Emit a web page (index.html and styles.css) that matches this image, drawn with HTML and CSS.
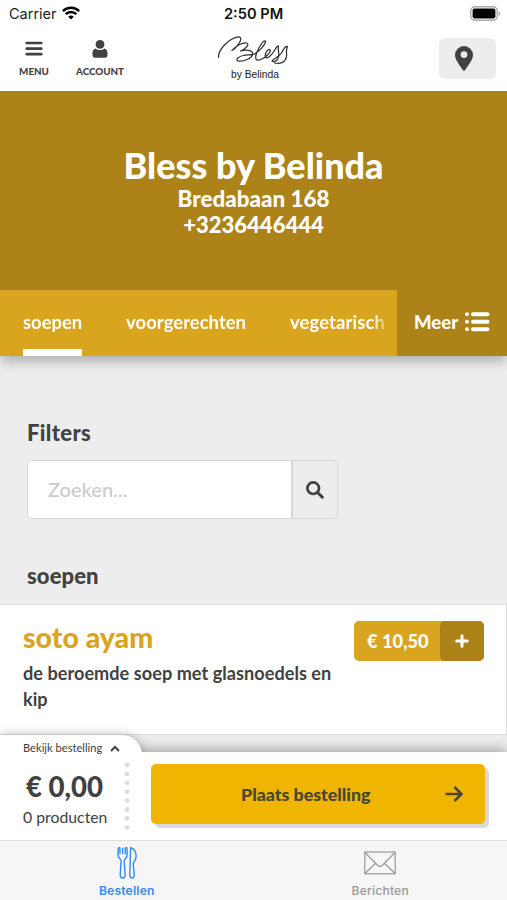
FILE: index.html
```html
<!DOCTYPE html>
<html lang="nl">
<head>
<meta charset="utf-8">
<meta name="viewport" content="width=device-width">
<title>Bless by Belinda</title>
<link rel="stylesheet" href="styles.css">
</head>
<body>
<div class="screen">
  <div class="status">
    <span class="carrier">Carrier</span>
    <svg class="wifi" width="18" height="14" viewBox="0 0 18 14" fill="none" stroke="#000" stroke-width="2.5"><path d="M.9 5.1a11.6 11.6 0 0 1 16.2 0M3.7 8.1a7.6 7.6 0 0 1 10.6 0"/><path d="M9 13.6 6.2 10.8a4 4 0 0 1 5.6 0z" fill="#000" stroke="none"/></svg>
    <span class="time">2:50 PM</span>
    <svg class="battery" width="31" height="15" viewBox="0 0 31 15"><rect x=".8" y=".8" width="26.4" height="13.4" rx="4" fill="#fff" stroke="#aaa" stroke-width="1.4"/><rect x="2.6" y="2.6" width="22.8" height="9.8" rx="2" fill="#000"/><path d="M28.6 5.2c2.3.9 2.3 3.7 0 4.6z" fill="#aaa"/></svg>
  </div>
  <header class="top">
    <a class="nav menu"><svg width="18" height="16" viewBox="0 0 18 16" stroke="#414141" stroke-width="2.7" stroke-linecap="round"><path d="M1.7 2h14.6M1.7 7.6h14.6M1.7 13.2h14.6"/></svg><span>MENU</span></a>
    <a class="nav account"><svg width="16" height="18" viewBox="0 0 16 18" fill="#414141"><circle cx="8" cy="4.4" r="4.4"/><path d="M3.4 8.5c2.7 2 6.5 2 9.2 0 2 .7 2.9 2.6 2.9 5.1v1.5c0 1.6-1 2.6-2.5 2.6H3C1.5 17.7.5 16.7.5 15.1v-1.5c0-2.5.9-4.4 2.9-5.1z"/></svg><span>ACCOUNT</span></a>
    <div class="logo"><svg width="72" height="30" viewBox="0 0 72 30" fill="none" stroke="#303030" stroke-width="1.25" stroke-linecap="round" stroke-linejoin="round"><path d="M.7 21.3C-.5 14 11 2.5 20 .9c4-.4 3.500 4-.5 8.600-2 2.500-4 4-5.500 5 4-4 10-8 14.500-7.500 3.500 1-.5 6-6 8 5-1.500 12-1 12.300 2.800C34.500 22.500 25 26 20 25c-3-1 .5-4.500 5-5.500 4-1 8 0 11.500-1.500C41 15.500 46 10 47.500 6.300c.5-2-1.500-2.300-3.500.7-3 4.500-7.500 12-6 16 1.500 3 8-.5 11-3.500 2.500-2.500 4.500-5.500 2.500-6-2-.3-5 4.500-4 7.500 1 2.500 5.500-1 8-5 2-3 3.500-6.500 5-6-1 3 1 7 0 11-.7 3.500-4 5.500-6.500 4 1-2 7-4 9.500-8 2-3 3-7.500 6-6.500-2 4-.5 7-1 10-.8 5.500-6 8-12 6.500"/></svg><span>by Belinda</span></div>
    <a class="location"><svg width="18" height="25" viewBox="0 0 18 25"><path fill="#414141" fill-rule="evenodd" d="M9 0a9 9 0 0 1 9 9c0 4.8-4.5 9.7-7.7 15q-1.3 1.5-2.6 0C4.5 18.7 0 13.8 0 9a9 9 0 0 1 9-9zm0 5.2a3.400 3.400 0 1 0 0 6.800 3.400 3.400 0 0 0 0-6.800z"/></svg></a>
  </header>
  <section class="hero"><h1>Bless by Belinda</h1><p class="street">Bredabaan 168</p><p class="phone">+3236446444</p></section>
  <nav class="categories">
    <div class="strip"><a class="cat active">soepen</a><a class="cat second">voorgerechten</a><a class="cat third">vegetarisch</a></div>
    <a class="more"><span>Meer</span><svg width="25" height="20" viewBox="0 0 25 20" fill="#fff"><circle cx="2" cy="2.2" r="2"/><circle cx="2" cy="9.7" r="2"/><circle cx="2" cy="17.2" r="2"/><rect x="6" y=".3" width="18.5" height="4" rx="2"/><rect x="6" y="7.8" width="18.5" height="4" rx="2"/><rect x="6" y="15.3" width="18.5" height="4" rx="2"/></svg></a>
  </nav>
  <main>
    <h2 class="filters">Filters</h2>
    <div class="search"><div class="field">Zoeken...</div><div class="go"><svg width="18" height="18" viewBox="0 0 18 18" fill="none" stroke="#414141" stroke-width="2.7"><circle cx="7.2" cy="7.2" r="5.8"/><path d="m11.5 11.5 4.8 4.6" stroke-width="3" stroke-linecap="round"/></svg></div></div>
    <h2 class="group">soepen</h2>
    <article class="product">
      <div class="info"><h3>soto ayam</h3><p>de beroemde soep met glasnoedels en kip</p></div>
      <div class="price"><span>€ 10,50</span><b><svg width="14" height="14" viewBox="0 0 14 14" stroke="#fff" stroke-width="3" stroke-linecap="round"><path d="M7 1.7v10.6M1.7 7h10.6"/></svg></b></div>
    </article>
  </main>
  <div class="order">
    <div class="peek"><span>Bekijk bestelling</span><svg width="10" height="7" viewBox="0 0 10 7" fill="none" stroke="#414141" stroke-width="2"><path d="m1 6 4-4 4 4"/></svg></div>
    <div class="bar">
      <div class="total"><strong>€ 0,00</strong><span>0 producten</span></div>
      <svg class="dots" width="6" height="70" viewBox="0 0 6 70"><path d="M3 3v64" stroke="#dcdcdc" stroke-width="4.8" stroke-linecap="round" stroke-dasharray="0 8.9"/></svg>
      <a class="place"><span>Plaats bestelling</span><svg width="18" height="16" viewBox="0 0 18 16" fill="none" stroke="#484637" stroke-width="2.5"><path d="M.5 8h16M9.5 1l7 7-7 7"/></svg></a>
    </div>
  </div>
  <nav class="tabs">
    <a class="tab on"><svg width="20" height="32" viewBox="0 0 20 32" fill="none" stroke="#2f8cf5" stroke-width="1.4" stroke-linejoin="round"><path d="M1.3 1C.8 5 .4 9.5 2.4 11.2c1 .9 1.7 1.5 1.7 3L3.2 28c0 4 5 4 5 0L7.1 14.2c0-1.5.8-2.1 1.8-3C10.8 9.5 10.3 5 9.9 1q-.8-.8-1.6 0v6.2M1.3 1q.8-.8 1.6 0v6.2M5.6.8v6.4M13.6.8c4.8.8 7.2 8.5 4 13.1-1.2 1.7-1.5 2.5-1.3 4.3l1 9.8c.2 4-4.6 4-4.5 0z"/></svg><span>Bestellen</span></a>
    <a class="tab"><svg width="32" height="24" viewBox="0 0 32 24" fill="none" stroke="#999" stroke-width="1.2"><rect x=".8" y="1" width="30.4" height="21.8"/><path d="m1 1.5 12.6 12.7q2.4 2.2 4.8 0L31 1.5M1 22.5l10.5-10.3M31 22.5 20.5 12.2"/></svg><span>Berichten</span></a>
  </nav>
</div>
</body>
</html>
```
FILE: styles.css
```css
* { box-sizing: border-box; }
body { margin: 0; font-family: Lato, sans-serif; color: #414141; background: #ededed; }
h1, h2, h3, p { margin: 0; }
svg { display: block; flex: none; }
.screen { width: 507px; height: 900px; overflow: hidden; display: flex; flex-direction: column; position: relative; }
.status { height: 28px; flex: none; background: #fff; display: grid; grid-template-columns: 47px 168px auto 1fr 31px; align-items: center; padding: 0 6px 0 9px; font-family: Inter, sans-serif; color: #222; }
.carrier { font-size: 14.5px; margin-top: -1px; }
.wifi { margin-left: 6px; margin-top: -2px; }
.time { font-size: 14.6px; font-weight: 600; color: #111; white-space: nowrap; margin-top: -1px; }
.battery { grid-column: 5; margin-top: -2px; }
.top { height: 63px; flex: none; background: #fff; display: flex; align-items: flex-start; }
.nav { display: flex; flex-direction: column; align-items: center; justify-content: space-between; height: 49px; font-size: 9.8px; line-height: 12px; font-weight: 900; }
.menu { width: 68px; padding-top: 13px; }
.account { width: 64px; padding-top: 12px; }
.logo { width: 123px; margin-left: 60px; display: flex; flex-direction: column; align-items: center; padding-top: 8px; font: 10.3px/17px "Liberation Sans", sans-serif; color: #222; }
.logo span { margin-left: 3px; }
.location { margin-left: 124px; margin-top: 10px; width: 57px; height: 41px; border-radius: 6px; background: #ededed; display: flex; justify-content: center; padding: 8px 7px 0 0; }
.hero { height: 199px; flex: none; background: #ad8319; color: #fff; text-align: center; padding-top: 52px; font-weight: 900; }
.hero h1 { font-size: 36px; line-height: 44px; font-weight: 900; }
.hero p { font-size: 22px; line-height: 25.5px; }
.hero .street { font-size: 22.4px; margin-top: -1px; }
.categories { position: relative; height: 66px; flex: none; display: flex; box-shadow: 0 6px 12px -1px rgba(0,0,0,.28); clip-path: inset(0 0 -24px 0); font-size: 18.4px; font-weight: 700; color: #fff; background: #d9a41e; }
.strip { width: 397px; padding: 0 10px 0 23px; display: flex; gap: 44px; overflow: hidden; -webkit-mask-image: linear-gradient(90deg, #000 372px, transparent 391px); }
.cat { flex: none; line-height: 65px; height: 66px; }
.second { letter-spacing: .06px; }
.third { letter-spacing: .12px; }
.active { border-bottom: 7px solid #fff; }
.more { width: 110px; background: #ad8319; display: flex; align-items: center; gap: 7px; padding: 0 0 2px 17px; font-weight: 900; font-size: 18.5px; }
main { flex: 1; }
h2 { font-size: 22px; line-height: 28px; font-weight: 900; padding-left: 27px; }
.filters { margin-top: 63px; letter-spacing: .35px; }
.search { margin: 13px 0 0 27px; width: 311px; height: 59px; border: 1.5px solid #d6d6d6; border-radius: 5px; display: flex; }
.field { flex: 1; background: #fff; border-radius: 4px 0 0 4px; color: #cbcbcb; font-size: 20px; font-weight: 500; line-height: 57px; padding-left: 20px; }
.go { width: 46px; border-left: 2px solid #d6d6d6; display: grid; place-items: center; }
.group { margin-top: 43px; letter-spacing: .1px; }
.product { margin-top: 14px; height: 131px; background: #fff; border: 1px solid #dedede; border-left: 0; display: flex; justify-content: space-between; padding: 16px 22px 0 23px; }
.info { width: 325px; }
h3 { color: #d9a41e; font-size: 28.5px; line-height: 32px; font-weight: 900; }
.info p { font-size: 18.1px; line-height: 26px; font-weight: 700; margin-top: 7px; letter-spacing: .04px; }
.price { width: 130px; height: 40px; border-radius: 5px; background: #d9a41e; color: #fff; display: flex; justify-content: space-between; font-size: 18.3px; font-weight: 900; line-height: 40px; padding-left: 13px; }
.price b { width: 44px; border-radius: 5px; background: #ad8319; display: grid; place-items: center; }
.order { position: absolute; left: 0; right: 0; top: 735px; z-index: 1; }
.order::before { content: ""; position: absolute; left: 0; right: 0; top: 17px; height: 40px; box-shadow: 0 -3px 12px rgba(0,0,0,.3); z-index: -1; }
.peek { width: 142px; height: 27px; background: #fff; border-radius: 0 20px 0 0; display: flex; align-items: flex-start; gap: 8px; padding: 5px 0 0 23px; font-size: 11.15px; line-height: 16px; box-shadow: 0 -2px 10px rgba(0,0,0,.2); }
.peek span { position: relative; z-index: 2; }
.peek svg { margin-top: 5px; }
.bar { height: 88px; margin-top: -10px; position: relative; background: #fff; display: flex; }
.total { width: 124px; padding: 16px 0 0 23px; display: flex; flex-direction: column; }
.total strong { font-size: 27.6px; line-height: 38px; font-weight: 900; padding-left: 3px; }
.total span { font-size: 15.8px; line-height: 21px; }
.dots { margin-top: 10px; }
.place { margin: 12px 0 0 21px; width: 334px; height: 60px; border-radius: 5px; background: #f0b500; box-shadow: 4px 4px 0 #d9d9d9; display: flex; align-items: center; justify-content: space-between; padding: 0 22px 0 90px; font-size: 17.8px; font-weight: 900; color: #484637; }
.tabs { position: absolute; z-index: 2; left: 0; right: 0; top: 840px; height: 60px; border-top: 1px solid #dedede; background: #f6f6f6; display: grid; grid-template-columns: 1fr 1fr; }
.tab { display: flex; flex-direction: column; align-items: center; justify-content: space-between; padding: 6px 0 2px; font: 500 12.2px/15px Inter, sans-serif; letter-spacing: .15px; color: #999; }
.tab + .tab { padding-top: 10px; }
.on { color: #2f8cf5; font-weight: 600; }
```
